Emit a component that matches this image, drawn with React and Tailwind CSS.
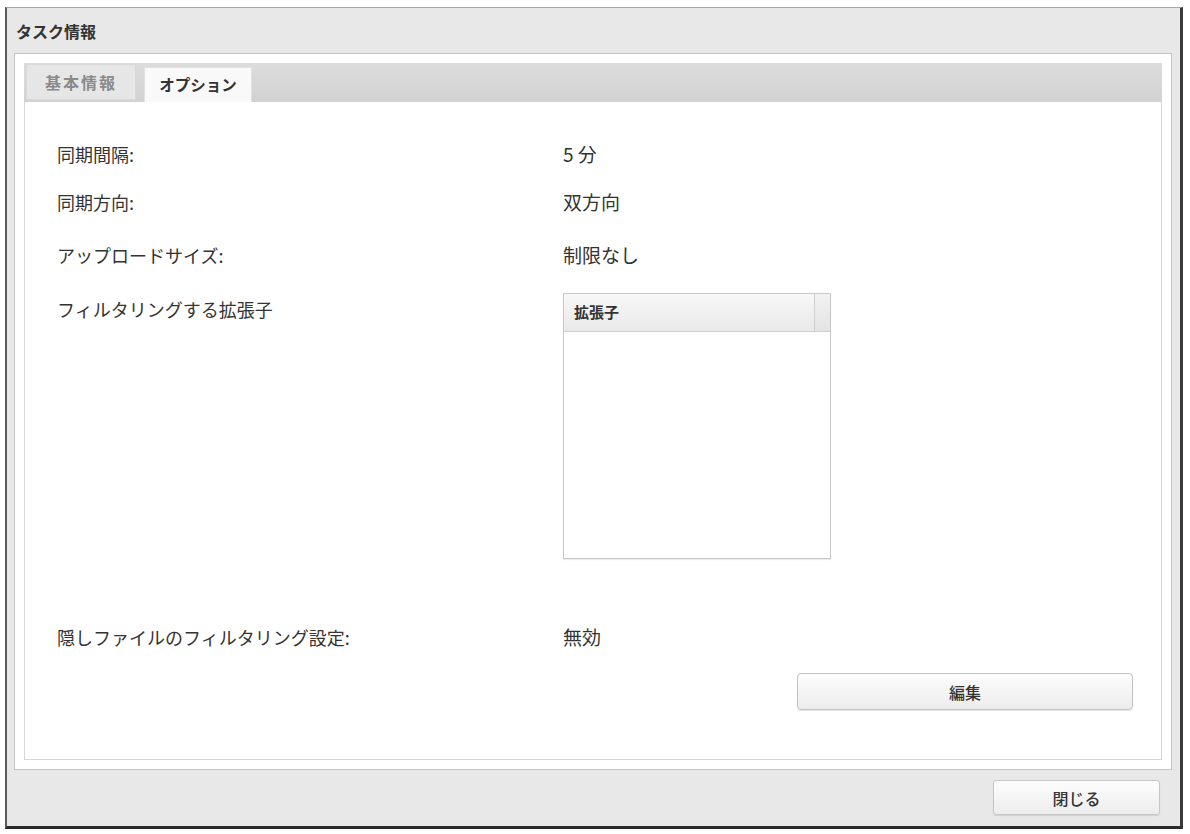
import React from "react";

const font = { fontFamily: '"Noto Sans CJK JP", "Noto Sans", sans-serif' };

function Row({ label, value, className = "" }) {
  return (
    <div className={"flex h-[24px] items-center " + className}>
      <div className="w-[506px] text-[18px] text-[#333]">{label}</div>
      <div className="text-[19px] text-[#333]">{value}</div>
    </div>
  );
}

export default function App() {
  return (
    <div className="w-[1190px] h-[834px] bg-white pt-[7px] pl-[5px]" style={font}>
      <div className="w-[1178px] h-[822px] flex flex-col bg-[#e8e8e8] border-t border-t-[#a8a8a8] border-l-2 border-l-[#5a5a5a] border-r-[3px] border-r-[#3a3a3a] border-b-[3px] border-b-[#2a2a2a]">
        {/* title bar */}
        <div className="h-[45px] flex items-center pl-[9px] text-[16px] font-bold text-[#333]">タスク情報</div>

        {/* main frame */}
        <div className="ml-[7px] mr-[8px] h-[717px] bg-white border border-[#c4c4c4] p-[9px] flex flex-col">
          {/* tab bar */}
          <div className="h-[39px] bg-gradient-to-b from-[#dcdcdc] to-[#d2d2d2] flex items-end pl-[2px] gap-[8px] shrink-0">
            <div className="w-[110px] h-[36px] mb-[2px] bg-[#e6e6e6] border border-[#d8d8d8] flex items-center justify-center text-[16px] font-bold text-[#8a8a8a] tracking-[2px]">
              基本情報
            </div>
            <div className="w-[108px] h-[35px] bg-[#f9f9f9] border border-[#e2e2e2] border-b-0 flex items-center justify-center text-[15.5px] font-bold text-[#333]">
              オプション
            </div>
          </div>

          {/* content */}
          <div className="flex-1 border border-t-0 border-[#d6d6d6] pl-[32px] pt-[40px]">
            <Row label="同期間隔:" value="5 分" />
            <Row label="同期方向:" value="双方向" className="mt-[24px]" />
            <Row label="アップロードサイズ:" value="制限なし" className="mt-[29px]" />

            <div className="flex mt-[26px]">
              <div className="w-[506px] h-[24px] mt-[4px] flex items-center text-[18px] text-[#333]">フィルタリングする拡張子</div>
              <div className="w-[268px] h-[266px] border border-[#c8c8c8] bg-white flex flex-col shadow-[0_1px_1px_rgba(0,0,0,0.08)]">
                <div className="h-[38px] flex border-b border-[#cfcfcf] bg-gradient-to-b from-[#f7f7f7] to-[#e9e9e9]">
                  <div className="flex-1 flex items-center pl-[10px] text-[15px] font-bold text-[#333]">拡張子</div>
                  <div className="w-[16px] border-l border-[#cfcfcf] bg-gradient-to-b from-[#f2f2f2] to-[#e4e4e4]"></div>
                </div>
              </div>
            </div>

            <Row label="隠しファイルのフィルタリング設定:" value="無効" className="mt-[66px]" />

            <div className="flex justify-end pr-[28px] mt-[24px]">
              <button className="w-[336px] h-[37px] rounded-[4px] border border-[#c2c2c2] bg-gradient-to-b from-[#fdfdfd] to-[#ececec] text-[16px] font-medium text-[#333] shadow-[0_1px_1px_rgba(0,0,0,0.1)]">
                編集
              </button>
            </div>
          </div>
        </div>

        {/* footer */}
        <div className="flex-1 flex justify-end items-start pt-[10px] pr-[20px]">
          <button className="w-[167px] h-[35px] rounded-[3px] border border-[#c6c6c6] bg-gradient-to-b from-[#fdfdfd] to-[#ededed] text-[16px] font-medium text-[#333] shadow-[0_1px_1px_rgba(0,0,0,0.1)]">
            閉じる
          </button>
        </div>
      </div>
    </div>
  );
}
